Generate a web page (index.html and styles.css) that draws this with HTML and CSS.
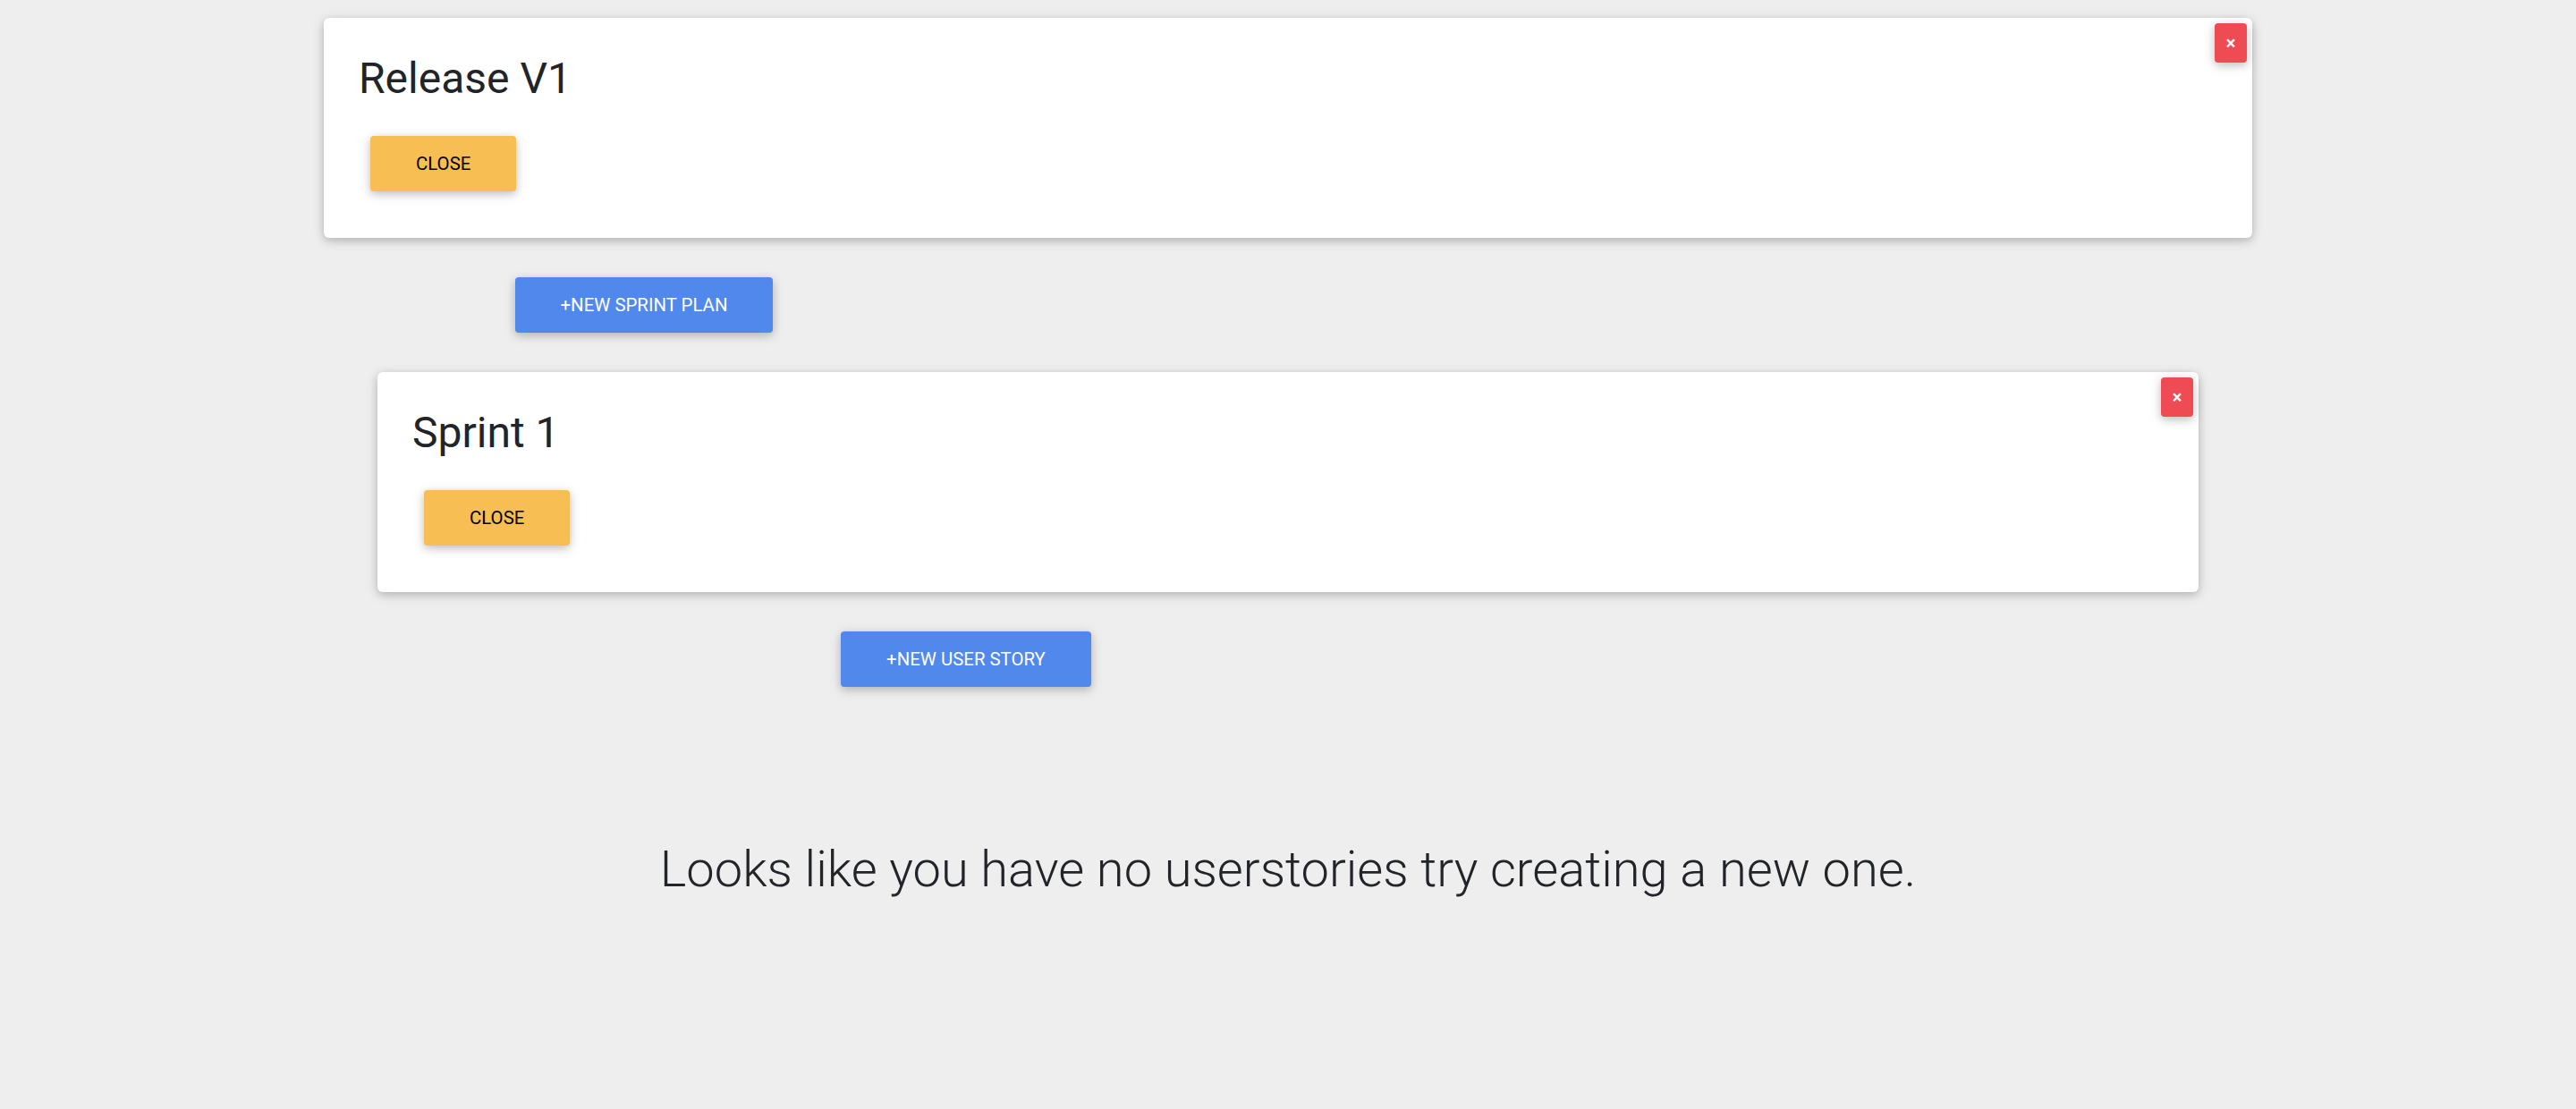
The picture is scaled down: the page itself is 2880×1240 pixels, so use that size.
FILE: index.html
```html
<!DOCTYPE html>
<html lang="en">
<head>
<meta charset="utf-8">
<title>Release planner</title>
<link rel="stylesheet" href="styles.css">
</head>
<body>
<main class="page">
  <section class="card card-release">
    <button class="btn-remove" type="button" aria-label="Remove">×</button>
    <h1 class="card-title">Release V1</h1>
    <button class="btn btn-warning" type="button">Close</button>
  </section>

  <div class="action-row action-sprint">
    <button class="btn btn-primary" type="button">+New Sprint Plan</button>
  </div>

  <section class="card card-sprint">
    <button class="btn-remove" type="button" aria-label="Remove">×</button>
    <h1 class="card-title">Sprint 1</h1>
    <button class="btn btn-warning" type="button">Close</button>
  </section>

  <div class="action-row action-story">
    <button class="btn btn-primary" type="button">+New User Story</button>
  </div>

  <p class="empty-message">Looks like you have no userstories try creating a new one.</p>
</main>
</body>
</html>
```

FILE: styles.css
```css
html, body {
  margin: 0;
  padding: 0;
}

body {
  background: #eeeeee;
  font-family: Roboto, "Noto Sans", "Liberation Sans", sans-serif;
  color: #212529;
  min-height: 1240px;
}

.page {
  display: flex;
  flex-direction: column;
  padding-top: 20px;
}

.card {
  position: relative;
  box-sizing: border-box;
  margin: 0 auto;
  background: #ffffff;
  border-radius: 6px;
  padding: 38px 39px 52px 39px;
  box-shadow: 0 3px 8px rgba(0, 0, 0, 0.16), 0 3px 15px rgba(0, 0, 0, 0.12);
  display: flex;
  flex-direction: column;
  align-items: flex-start;
}

.card-release {
  width: 2156px;
}

.card-sprint {
  width: 2036px;
}

.card-title {
  margin: 0 0 34px 0;
  font-size: 48px;
  line-height: 60px;
  font-weight: 400;
  color: #212529;
}

.btn {
  box-sizing: border-box;
  height: 62px;
  padding: 0 51px;
  border: none;
  border-radius: 4px;
  font-family: Roboto, "Noto Sans", "Liberation Sans", sans-serif;
  font-size: 20.4px;
  font-weight: 400;
  text-transform: uppercase;
  line-height: 62px;
  white-space: nowrap;
  cursor: pointer;
  box-shadow: 0 3px 8px rgba(0, 0, 0, 0.16), 0 3px 15px rgba(0, 0, 0, 0.12);
}

.card .btn {
  margin-left: 13px;
}

.btn-warning {
  background: #f6be53;
  color: #000000;
}

.btn-primary {
  background: #5188ec;
  color: #ffffff;
}

.btn-remove {
  position: absolute;
  top: 6px;
  right: 6px;
  width: 36px;
  height: 44px;
  padding: 0;
  border: none;
  border-radius: 4px;
  background: #ee4b54;
  color: #ffffff;
  font-family: Roboto, "Noto Sans", "Liberation Sans", sans-serif;
  font-size: 20px;
  font-weight: 700;
  line-height: 44px;
  text-align: center;
  box-shadow: 0 3px 8px rgba(0, 0, 0, 0.16), 0 3px 15px rgba(0, 0, 0, 0.12);
}

.action-row {
  display: flex;
  justify-content: center;
  margin: 44px 0;
}

.action-sprint {
  width: 1440px;
}

.action-story {
  width: 2160px;
}

.empty-message {
  margin: 127px 0 0 0;
  text-align: center;
  font-size: 56px;
  line-height: 67px;
  font-weight: 300;
  color: #212529;
}
```
